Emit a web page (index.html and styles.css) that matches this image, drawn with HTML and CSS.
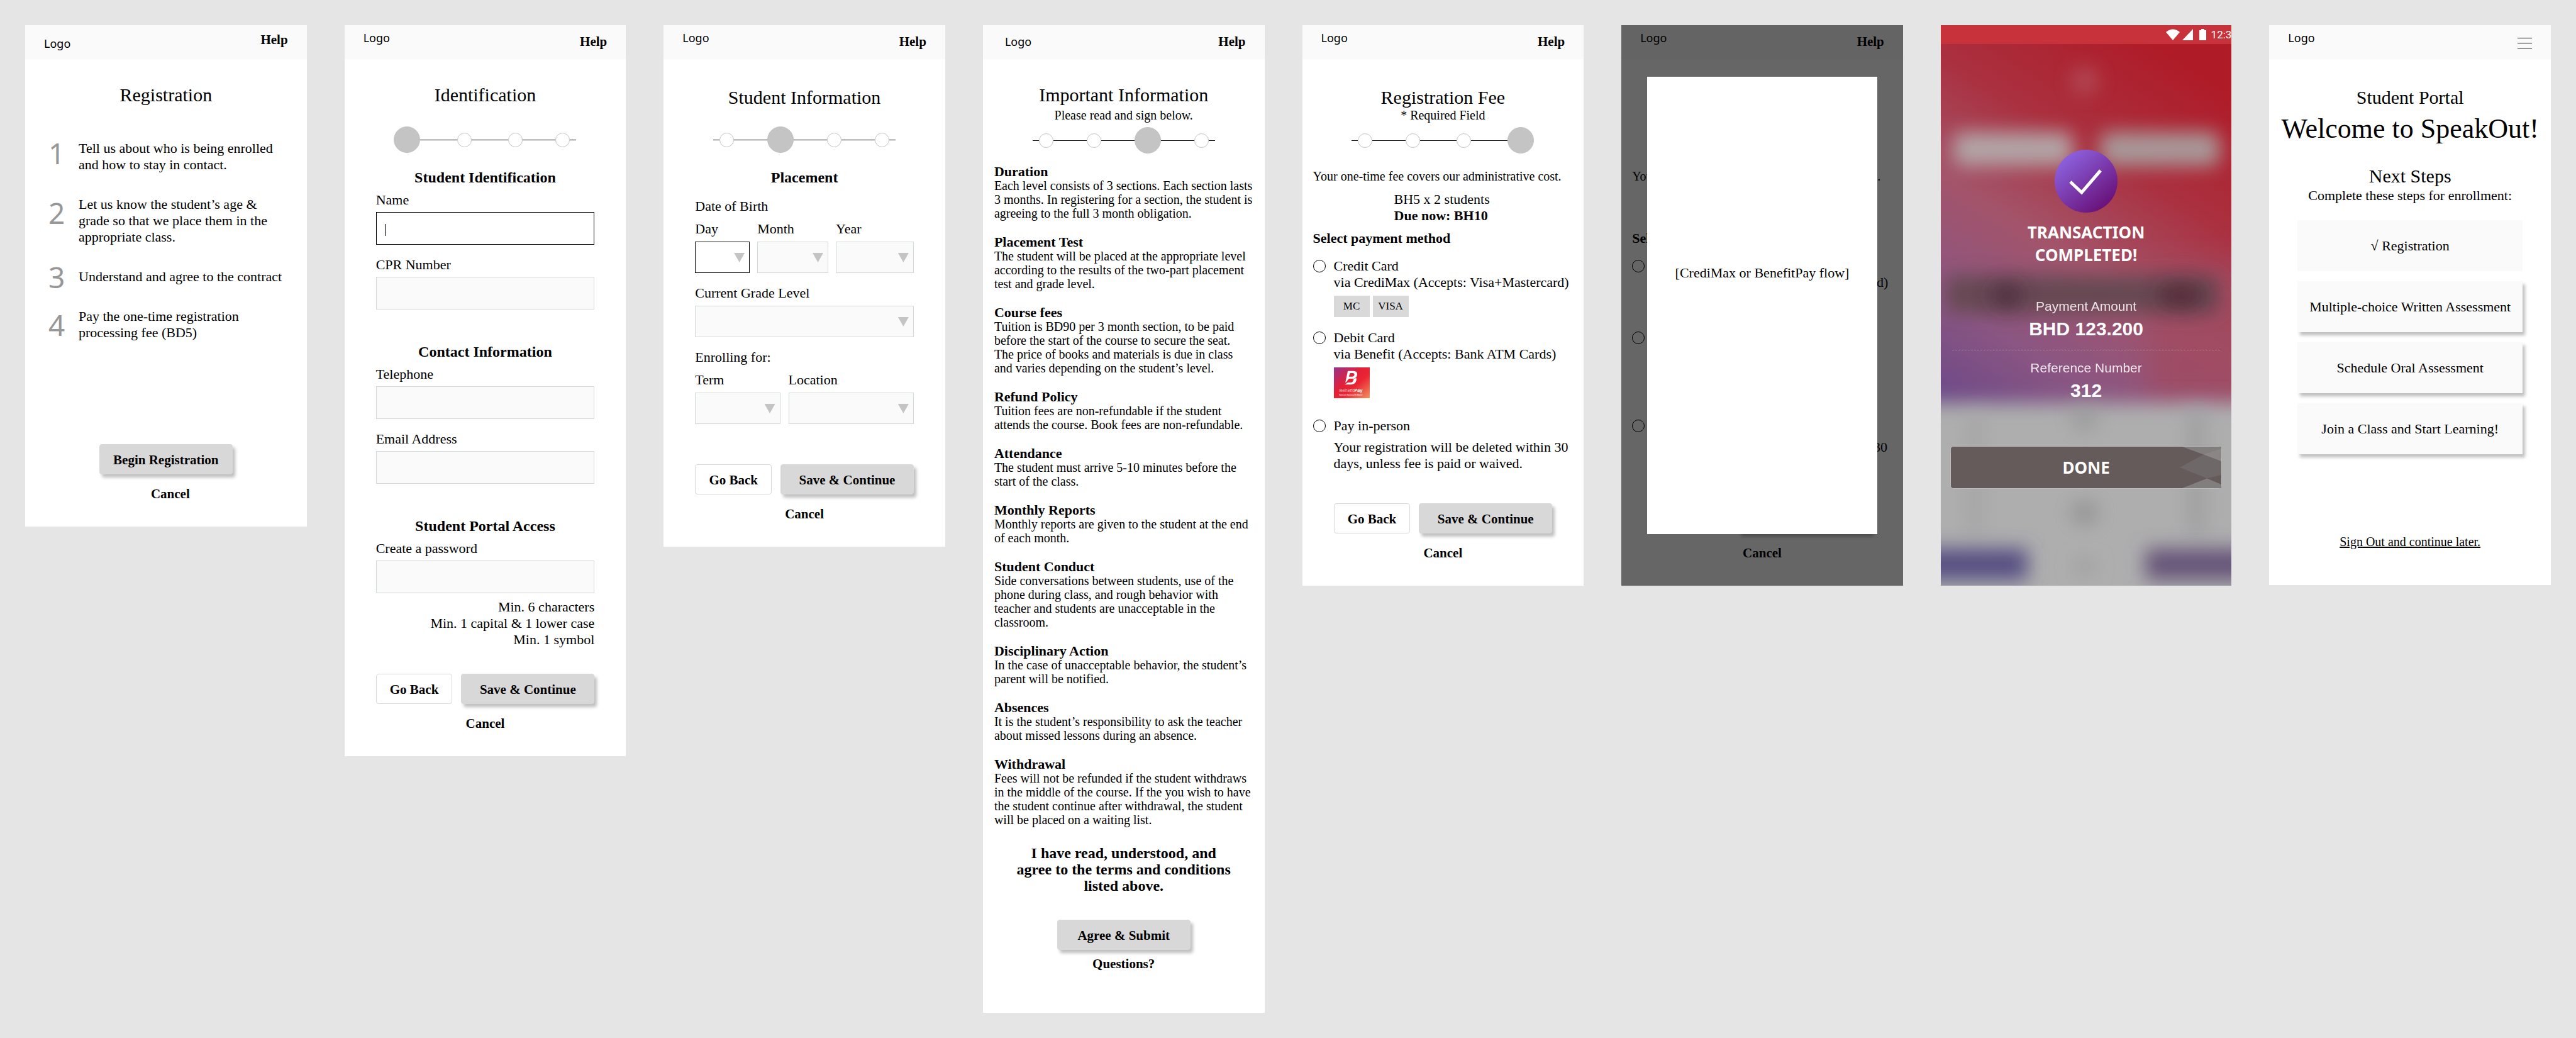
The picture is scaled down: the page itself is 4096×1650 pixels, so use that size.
FILE: index.html
```html
<!DOCTYPE html>
<html lang="en">
<head>
<meta charset="utf-8">
<title>SpeakOut! Registration Flow</title>
<meta name="viewport" content="width=device-width, initial-scale=1">
<link rel="stylesheet" href="styles.css">
</head>
<body>
<main class="board">

  <section class="screen">
    <header class="header">
      <span class="logo logo--low">Logo</span>
      <a class="link header__help header__help--high" href="#">Help</a>
    </header>
    <h1 class="title">Registration</h1>
    <ol class="steps">
      <li class="steps__item"><span class="steps__num steps__num--top">1</span><p>Tell us about who is being enrolled<br>and how to stay in contact.</p></li>
      <li class="steps__item"><span class="steps__num">2</span><p>Let us know the student’s age &amp;<br>grade so that we place them in the<br>appropriate class.</p></li>
      <li class="steps__item"><span class="steps__num steps__num--single">3</span><p>Understand and agree to the contract</p></li>
      <li class="steps__item"><span class="steps__num">4</span><p>Pay the one-time registration<br>processing fee (BD5)</p></li>
    </ol>
    <footer class="footer footer--start">
      <button class="btn btn--primary btn--solo" type="button">Begin Registration</button>
      <a class="link footer__link footer__link--shifted" href="#">Cancel</a>
    </footer>
  </section>

  <section class="screen">
    <header class="header">
      <span class="logo">Logo</span>
      <a class="link header__help" href="#">Help</a>
    </header>
    <h1 class="title">Identification</h1>
    <div class="stepper stepper--one">
      <span class="dot dot--on"></span><span class="bar bar--long"></span><span class="dot"></span><span class="bar bar--long"></span><span class="dot"></span><span class="bar"></span><span class="dot"></span><span class="bar bar--tail"></span>
    </div>
    <form class="form">
      <section class="form__group">
        <h2 class="subtitle">Student Identification</h2>
        <div class="field"><label for="name">Name</label><input class="input input--active" id="name" type="text" value="|"></div>
        <div class="field"><label for="cpr">CPR Number</label><input class="input" id="cpr" type="text"></div>
      </section>
      <section class="form__group">
        <h2 class="subtitle">Contact Information</h2>
        <div class="field"><label for="tel">Telephone</label><input class="input" id="tel" type="tel"></div>
        <div class="field"><label for="email">Email Address</label><input class="input" id="email" type="email"></div>
      </section>
      <section class="form__group">
        <h2 class="subtitle">Student Portal Access</h2>
        <div class="field"><label for="password">Create a password</label><input class="input" id="password" type="password"></div>
        <p class="form__hint">Min. 6 characters<br>Min. 1 capital &amp; 1 lower case<br>Min. 1 symbol</p>
      </section>
    </form>
    <footer class="footer footer--identification">
      <div class="actions"><button class="btn btn--outline" type="button">Go Back</button><button class="btn btn--primary" type="button">Save &amp; Continue</button></div>
      <a class="link footer__link" href="#">Cancel</a>
    </footer>
  </section>

  <section class="screen">
    <header class="header">
      <span class="logo">Logo</span>
      <a class="link header__help" href="#">Help</a>
    </header>
    <h1 class="title title--low">Student Information</h1>
    <div class="stepper stepper--two">
      <span class="bar bar--tail"></span><span class="dot"></span><span class="bar"></span><span class="dot dot--on"></span><span class="bar"></span><span class="dot"></span><span class="bar"></span><span class="dot"></span><span class="bar bar--tail"></span>
    </div>
    <form class="placement">
      <h2 class="subtitle">Placement</h2>
      <p class="placement__lead">Date of Birth</p>
      <div class="placement__row placement__row--birth">
        <div class="choice"><label for="day">Day</label><span class="select"><select class="input input--active" id="day"><option></option></select></span></div>
        <div class="choice"><label for="month">Month</label><span class="select"><select class="input" id="month"><option></option></select></span></div>
        <div class="choice"><label for="year">Year</label><span class="select"><select class="input" id="year"><option></option></select></span></div>
      </div>
      <div class="placement__row placement__row--grade">
        <div class="choice"><label for="grade">Current Grade Level</label><span class="select"><select class="input" id="grade"><option></option></select></span></div>
      </div>
      <p class="placement__lead">Enrolling for:</p>
      <div class="placement__row placement__row--enroll">
        <div class="choice"><label for="term">Term</label><span class="select"><select class="input" id="term"><option></option></select></span></div>
        <div class="choice"><label for="location">Location</label><span class="select"><select class="input" id="location"><option></option></select></span></div>
      </div>
    </form>
    <footer class="footer footer--placement">
      <div class="actions"><button class="btn btn--outline" type="button">Go Back</button><button class="btn btn--primary" type="button">Save &amp; Continue</button></div>
      <a class="link footer__link" href="#">Cancel</a>
    </footer>
  </section>

  <section class="screen">
    <header class="header header--wide">
      <span class="logo logo--mid">Logo</span>
      <a class="link header__help" href="#">Help</a>
    </header>
    <h1 class="title">Important Information</h1>
    <p class="tagline tagline--spaced">Please read and sign below.</p>
    <div class="stepper stepper--under">
      <span class="bar bar--tail"></span><span class="dot"></span><span class="bar"></span><span class="dot"></span><span class="bar"></span><span class="dot dot--on"></span><span class="bar"></span><span class="dot"></span><span class="bar bar--tail"></span>
    </div>
    <div class="terms">
      <section><h2>Duration</h2><p>Each level consists of 3 sections. Each section lasts<br>3 months. In registering for a section, the student is<br>agreeing to the full 3 month obligation.</p></section>
      <section><h2>Placement Test</h2><p>The student will be placed at the appropriate level<br>according to the results of the two-part placement<br>test and grade level.</p></section>
      <section><h2>Course fees</h2><p>Tuition is BD90 per 3 month section, to be paid<br>before the start of the course to secure the seat.<br>The price of books and materials is due in class<br>and varies depending on the student’s level.</p></section>
      <section><h2>Refund Policy</h2><p>Tuition fees are non-refundable if the student<br>attends the course. Book fees are non-refundable.</p></section>
      <section><h2>Attendance</h2><p>The student must arrive 5-10 minutes before the<br>start of the class.</p></section>
      <section><h2>Monthly Reports</h2><p>Monthly reports are given to the student at the end<br>of each month.</p></section>
      <section><h2>Student Conduct</h2><p>Side conversations between students, use of the<br>phone during class, and rough behavior with<br>teacher and students are unacceptable in the<br>classroom.</p></section>
      <section><h2>Disciplinary Action</h2><p>In the case of unacceptable behavior, the student’s<br>parent will be notified.</p></section>
      <section><h2>Absences</h2><p>It is the student’s responsibility to ask the teacher<br>about missed lessons during an absence.</p></section>
      <section><h2>Withdrawal</h2><p>Fees will not be refunded if the student withdraws<br>in the middle of the course. If the you wish to have<br>the student continue after withdrawal, the student<br>will be placed on a waiting list.</p></section>
    </div>
    <p class="consent">I have read, understood, and<br>agree to the terms and conditions<br>listed above.</p>
    <footer class="footer footer--terms">
      <button class="btn btn--primary btn--solo" type="button">Agree &amp; Submit</button>
      <a class="link footer__link footer__link--tight" href="#">Questions?</a>
    </footer>
  </section>

  <section class="screen">
    <header class="header">
      <span class="logo">Logo</span>
      <a class="link header__help" href="#">Help</a>
    </header>
    <h1 class="title title--low">Registration Fee</h1>
    <p class="tagline">* Required Field</p>
    <div class="stepper stepper--under">
      <span class="bar bar--tail"></span><span class="dot"></span><span class="bar"></span><span class="dot"></span><span class="bar bar--long"></span><span class="dot"></span><span class="bar bar--long"></span><span class="dot dot--on"></span>
    </div>
    <div class="fee">
      <p class="fee__note">Your one-time fee covers our administrative cost.</p>
      <p class="fee__due">BH5 x 2 students<br><strong>Due now: BH10</strong></p>
      <h2 class="fee__heading">Select payment method</h2>
      <div class="method">
        <input class="method__radio" id="credit" type="radio" name="method">
        <label class="method__label" for="credit">Credit Card<br>via CrediMax (Accepts: Visa+Mastercard)</label>
        <div class="method__cards"><span class="card">MC</span><span class="card">VISA</span></div>
      </div>
      <div class="method">
        <input class="method__radio" id="debit" type="radio" name="method">
        <label class="method__label" for="debit">Debit Card<br>via Benefit (Accepts: Bank ATM Cards)</label>
        <div class="method__cards">
          <svg class="benefit" viewBox="0 0 276 240" preserveAspectRatio="none">
            <defs><linearGradient id="benefitFill" x1="0" y1="0" x2="1" y2="1"><stop offset="0" stop-color="#96348c"/><stop offset=".42" stop-color="#e51f36"/><stop offset=".6" stop-color="#ea2534"/><stop offset="1" stop-color="#f0935f"/></linearGradient></defs>
            <rect width="276" height="240" fill="url(#benefitFill)"/>
            <path d="M107 28H150Q182 30 179 55Q178 74 162 84L150 88H115L93 117H88ZM124 44L115 72H140Q156 70 158 56Q158 45 146 44Z" fill="#fff" fill-rule="evenodd"/>
            <path d="M152 90L172 82Q178 98 168 114Q156 133 130 134H84L108 117H134Q148 114 152 90Z" fill="#fff"/>
            <text x="131" y="192" font-family="Noto Sans, sans-serif" font-size="36" font-weight="300" fill="#fff" text-anchor="middle">Benefit<tspan font-weight="700">Pay</tspan></text>
            <text x="131" y="219" font-family="Noto Sans, sans-serif" font-size="15" fill="#fff" text-anchor="middle">Bahrain National E-Wallet</text>
          </svg>
        </div>
      </div>
      <div class="method method--person">
        <input class="method__radio" id="person" type="radio" name="method">
        <label class="method__label" for="person">Pay in-person</label>
        <p class="method__note">Your registration will be deleted within 30<br>days, unless fee is paid or waived.</p>
      </div>
    </div>
    <footer class="footer footer--fee">
      <div class="actions"><button class="btn btn--outline" type="button">Go Back</button><button class="btn btn--primary" type="button">Save &amp; Continue</button></div>
      <a class="link footer__link" href="#">Cancel</a>
    </footer>
  </section>

  <section class="screen screen--modal">
    <header class="header">
      <span class="logo">Logo</span>
      <a class="link header__help" href="#">Help</a>
    </header>
    <h1 class="title title--low">Registration Fee</h1>
    <p class="tagline">* Required Field</p>
    <div class="stepper stepper--under">
      <span class="bar bar--tail"></span><span class="dot"></span><span class="bar"></span><span class="dot"></span><span class="bar bar--long"></span><span class="dot"></span><span class="bar bar--long"></span><span class="dot dot--on"></span>
    </div>
    <div class="fee">
      <p class="fee__note">Your one-time fee covers our administrative cost.</p>
      <p class="fee__due">BH5 x 2 students<br><strong>Due now: BH10</strong></p>
      <h2 class="fee__heading">Select payment method</h2>
      <div class="method">
        <input class="method__radio" id="credit-open" type="radio" name="method-open">
        <label class="method__label" for="credit-open">Credit Card<br>via CrediMax (Accepts: Visa+Mastercard)</label>
        <div class="method__cards"><span class="card">MC</span><span class="card">VISA</span></div>
      </div>
      <div class="method">
        <input class="method__radio" id="debit-open" type="radio" name="method-open">
        <label class="method__label" for="debit-open">Debit Card<br>via Benefit (Accepts: Bank ATM Cards)</label>
        <div class="method__cards"><span class="benefit"></span></div>
      </div>
      <div class="method method--person">
        <input class="method__radio" id="person-open" type="radio" name="method-open">
        <label class="method__label" for="person-open">Pay in-person</label>
        <p class="method__note">Your registration will be deleted within 30<br>days, unless fee is paid or waived.</p>
      </div>
    </div>
    <footer class="footer footer--fee">
      <div class="actions"><button class="btn btn--outline" type="button">Go Back</button><button class="btn btn--primary" type="button">Save &amp; Continue</button></div>
      <a class="link footer__link" href="#">Cancel</a>
    </footer>
    <div class="backdrop"></div>
    <div class="modal" role="dialog" aria-label="Payment">[CrediMax or BenefitPay flow]</div>
  </section>

  <section class="screen receipt">
    <svg class="receipt__bg" viewBox="0 0 463 891" preserveAspectRatio="none" aria-hidden="true">
      <defs>
        <linearGradient id="wash" gradientUnits="userSpaceOnUse" x1="400" y1="60" x2="60" y2="620">
          <stop offset="0" stop-color="#af1b27"/><stop offset=".3" stop-color="#aa303f"/><stop offset=".55" stop-color="#a3546a"/><stop offset=".8" stop-color="#8b5682"/><stop offset="1" stop-color="#6f4a88"/>
        </linearGradient>
        <filter id="soft" x="-100%" y="-150%" width="300%" height="400%"><feGaussianBlur stdDeviation="15"/></filter>
        <filter id="softer" x="-100%" y="-150%" width="300%" height="400%"><feGaussianBlur stdDeviation="22"/></filter>
      </defs>
      <rect width="463" height="891" fill="url(#wash)"/>
      <rect x="330" y="380" width="190" height="220" fill="#a04860" opacity=".7" filter="url(#softer)"/>
      <circle cx="229" cy="88" r="22" fill="#b45864" opacity=".7" filter="url(#soft)"/>
      <rect x="20" y="170" width="190" height="54" rx="14" fill="#b3aaab" opacity=".95" filter="url(#soft)"/>
      <rect x="254" y="170" width="190" height="54" rx="14" fill="#a89f9f" opacity=".95" filter="url(#soft)"/>
      <rect x="8" y="398" width="434" height="60" rx="14" fill="#664853" filter="url(#soft)"/>
      <ellipse cx="105" cy="430" rx="26" ry="20" fill="#4c2c3e" opacity=".8" filter="url(#soft)"/>
      <ellipse cx="382" cy="430" rx="38" ry="20" fill="#522636" opacity=".8" filter="url(#soft)"/>
      <rect x="-60" y="600" width="583" height="360" fill="#aeaeaf" filter="url(#soft)"/>
      <ellipse cx="229" cy="625" rx="22" ry="20" fill="#989899" opacity=".8" filter="url(#soft)"/>
      <ellipse cx="229" cy="775" rx="22" ry="18" fill="#8c8c8d" opacity=".8" filter="url(#soft)"/>
      <ellipse cx="229" cy="860" rx="18" ry="10" fill="#9a9a9b" filter="url(#soft)"/>
      <rect x="392" y="610" width="30" height="200" fill="#a0a0a1" filter="url(#soft)"/>
      <rect x="42" y="620" width="26" height="190" fill="#a5a5a6" filter="url(#soft)"/>
      <rect x="-60" y="832" width="198" height="50" fill="#565082" filter="url(#soft)"/>
      <rect x="326" y="832" width="198" height="50" fill="#665478" filter="url(#soft)"/>
    </svg>
    <div class="status">
      <svg class="status__icons" viewBox="0 0 64 18" aria-hidden="true">
        <path d="M0 5Q11-4 22 5L11 18ZM26 18L43 0V18ZM53 2h3V0h5v2h3v16H53Z" fill="#fff"/>
      </svg>
      <span class="status__time">12:3</span>
    </div>
    <div class="receipt__body">
      <svg class="receipt__tick" viewBox="0 0 100 100" aria-hidden="true">
        <defs><linearGradient id="tickFill" x1=".15" y1=".1" x2=".8" y2=".9"><stop offset="0" stop-color="#8c63e0"/><stop offset="1" stop-color="#6a127a"/></linearGradient></defs>
        <circle cx="50" cy="50" r="50" fill="url(#tickFill)"/>
        <path d="M25 51L43 68L73 33" fill="none" stroke="#fff" stroke-width="5"/>
      </svg>
      <h1 class="receipt__title">TRANSACTION<br>COMPLETED!</h1>
      <dl class="receipt__list">
        <div class="receipt__row"><dt>Payment Amount</dt><dd>BHD 123.200</dd></div>
        <div class="receipt__row"><dt>Reference Number</dt><dd>312</dd></div>
      </dl>
      <button class="receipt__done" type="button">
        <svg class="receipt__folds" viewBox="0 0 70 68" preserveAspectRatio="none" aria-hidden="true">
          <path d="M4 0H70V22L40 13Z" fill="#837e7e"/><path d="M4 68L46 52L70 62V68Z" fill="#837e7e"/><path d="M0 34L40 13L70 24V46L46 52Z" fill="#6f6868"/><path d="M40 13L70 3V24Z" fill="#8b8686"/>
        </svg>
        <span class="receipt__done-text">DONE</span>
      </button>
    </div>
  </section>

  <section class="screen">
    <header class="header">
      <span class="logo">Logo</span>
      <button class="menu" type="button" aria-label="Menu"><span></span><span></span><span></span></button>
    </header>
    <h1 class="title title--low">Student Portal</h1>
    <p class="welcome">Welcome to SpeakOut!</p>
    <h2 class="next">Next Steps</h2>
    <p class="next__note">Complete these steps for enrollment:</p>
    <nav class="tasks">
      <a class="task task--done" href="#">√ Registration</a>
      <a class="task" href="#">Multiple-choice Written Assessment</a>
      <a class="task" href="#">Schedule Oral Assessment</a>
      <a class="task" href="#">Join a Class and Start Learning!</a>
    </nav>
    <a class="signout" href="#">Sign Out and continue later.</a>
  </section>

</main>
</body>
</html>
```
FILE: styles.css
```css
*, *::before, *::after { box-sizing: border-box; }

body {
  margin: 0;
  background: #e5e5e5;
  color: #000;
  font: 22px/26px "Liberation Serif", "Times New Roman", serif;
}

h1, h2, p, ol, dl, dd { margin: 0; padding: 0; }
button, input, select { font: inherit; color: inherit; margin: 0; }
a { color: inherit; }

.board {
  display: grid;
  grid-template-columns: 720fr 720fr 720fr 720fr 720fr 720fr 744fr 720fr;
  gap: 60px;
  align-items: start;
  padding: 40px;
}

.screen {
  display: flex;
  flex-direction: column;
  background: #fff;
  white-space: nowrap;
  padding-bottom: 40px;
}

/* Header */
.header {
  display: flex;
  justify-content: space-between;
  align-items: flex-start;
  min-height: 54px;
  padding: 0 30px;
  background: #fafafa;
}
.header--wide { padding-left: 35px; }
.logo { margin-top: 8px; font: 18px/24px "Noto Sans", sans-serif; }
.logo--mid { margin-top: 14px; }
.logo--low { margin-top: 17px; }
.link { font-size: 21px; line-height: 24px; font-weight: bold; text-decoration: none; }
.header__help { margin-top: 14px; }
.header__help--high { margin-top: 11px; }
.menu {
  display: flex;
  flex-direction: column;
  gap: 7px;
  width: 23px;
  margin-top: 20px;
  padding: 0;
  border: 0;
  background: none;
}
.menu span { height: 1px; background: #000; }

/* Headings */
.title {
  margin-top: 40px;
  font-size: 30px;
  line-height: 34px;
  font-weight: normal;
  text-align: center;
}
.title--low { margin-top: 44px; }
.subtitle { font-size: 24px; line-height: 28px; text-align: center; }
.tagline { font-size: 20px; line-height: 22px; text-align: center; }
.tagline--spaced { margin-top: 4px; }

/* Progress */
.stepper {
  display: flex;
  align-items: center;
  align-self: center;
  width: 290px;
  height: 42px;
}
.stepper--one { margin-top: 33px; }
.stepper--two { margin-top: 29px; }
.stepper--under { margin-top: 8px; }
.dot { width: 23px; height: 23px; border: 1px solid #c4c4c4; border-radius: 50%; background: #fff; }
.dot--on { width: 42px; height: 42px; background: #c4c4c4; }
.bar { flex: 10; height: 1px; background: #000; }
.bar--long { flex: 11; }
.bar--tail { flex: none; width: 10px; }

/* Overview list */
.steps {
  display: flex;
  flex-direction: column;
  gap: 37px;
  margin-top: 55px;
  padding: 0 16px 0 37px;
  list-style: none;
}
.steps__item { display: flex; align-items: flex-start; gap: 22px; }
.steps__num { width: 26px; font: 46px/52px "Noto Sans", sans-serif; color: #979797; }
.steps__num--top { line-height: 40px; }
.steps__num--single { line-height: 26px; }

/* Buttons */
.footer { display: flex; flex-direction: column; align-items: center; padding: 0 50px; }
.footer--start { margin-top: 164px; }
.footer--identification { margin-top: 41px; }
.footer--placement { margin-top: 64px; }
.footer--terms { margin-top: 41px; padding-bottom: 26px; }
.footer--fee { margin-top: 50px; }
.footer__link { margin-top: 19px; }
.footer__link--shifted { padding-left: 14px; }
.footer__link--tight { margin-top: 10px; }
.actions { display: grid; grid-template-columns: 122fr 212fr; gap: 14px; width: 100%; }
.btn {
  min-height: 48px;
  padding: 2px 0 0;
  border: 1px solid #d8d8d8;
  border-radius: 4px;
  background: #fff;
  font-size: 21px;
  line-height: 24px;
  font-weight: bold;
}
.btn--primary { background: #d8d8d8; box-shadow: 4px 5px 5px rgba(0, 0, 0, .25); }
.btn--solo { width: 212px; }

/* Fields */
.form { display: flex; flex-direction: column; gap: 53px; margin-top: 25px; padding: 0 50px; }
.form__group { display: flex; flex-direction: column; }
.field { display: flex; flex-direction: column; gap: 6px; margin-top: 9px; }
.field + .field { margin-top: 19px; }
.form__hint { margin-top: 9px; text-align: right; }
.input {
  width: 100%;
  height: 52px;
  padding: 0 12px;
  border: 1px solid #d0d8da;
  border-radius: 0;
  background: #fafafa;
  appearance: none;
}
.input--active { border-color: #000; background: #fff; }

.placement { display: flex; flex-direction: column; margin-top: 25px; padding: 0 50px; }
.placement__lead { margin-top: 19px; }
.placement__row { display: grid; margin-top: 10px; }
.placement__row--birth { grid-template-columns: 87fr 113fr 124fr; gap: 12px; }
.placement__row--grade { margin-top: 19px; }
.placement__row--enroll { grid-template-columns: 135fr 199fr; gap: 13px; }
.choice { display: flex; flex-direction: column; gap: 7px; }
.select { position: relative; display: block; }
.select .input { display: block; height: 50px; }
.select::after {
  content: "";
  position: absolute;
  right: 8px;
  top: 18px;
  width: 17px;
  height: 15px;
  background: #c4c4c4;
  clip-path: polygon(0 0, 100% 0, 50% 100%);
  pointer-events: none;
}

/* Terms */
.terms {
  display: flex;
  flex-direction: column;
  gap: 24px;
  margin-top: 18px;
  padding-left: 18px;
  font-size: 20px;
  line-height: 22px;
}
.terms h2 { font-size: 22px; line-height: 22px; }
.consent { margin-top: 29px; font-size: 24px; line-height: 26px; font-weight: bold; text-align: center; }

/* Fee */
.fee { display: flex; flex-direction: column; margin-top: 25px; padding-left: 17px; }
.fee__note { font-size: 20px; line-height: 22px; }
.fee__due { margin-top: 13px; padding-left: 129px; }
.fee__heading { margin-top: 12px; font-size: 22px; line-height: 22px; }
.method { display: grid; grid-template-columns: 20px 1fr; column-gap: 13px; margin-top: 20px; }
.method--person { margin-top: 31px; }
.method__radio {
  width: 20px;
  height: 20px;
  margin-top: 3px;
  border: 1px solid #000;
  border-radius: 50%;
  appearance: none;
}
.method__cards, .method__note { grid-column: 2; margin-top: 8px; }
.method__cards { display: flex; gap: 5px; }
.card {
  width: 57px;
  height: 34px;
  background: #d9d9d9;
  font-size: 17px;
  line-height: 34px;
  text-align: center;
}
.benefit { width: 57px; height: 49px; background: #e51f36; }

/* Payment dialog */
.screen--modal { position: relative; }
.backdrop { position: absolute; inset: 0; background: rgba(0, 0, 0, .6); }
.modal {
  position: absolute;
  inset: 82px 41px;
  padding-top: 299px;
  background: #fff;
  text-align: center;
}

/* Receipt */
.receipt {
  position: relative;
  overflow: hidden;
  padding-bottom: 154px;
  color: #fff;
  font: 21px/26px "Liberation Sans", Arial, sans-serif;
}
.receipt__bg { position: absolute; inset: 0; width: 100%; height: 100%; }
.status {
  position: relative;
  display: flex;
  align-items: center;
  justify-content: flex-end;
  gap: 8px;
  height: 30px;
  background: #c8323a;
}
.status__icons { flex: none; width: 64px; height: 18px; }
.status__time { font: 17px/30px Roboto, sans-serif; }
.receipt__body {
  position: relative;
  display: flex;
  flex-direction: column;
  align-items: center;
  padding: 168px 15px 0;
}
.receipt__tick { width: 100px; height: 100px; }
.receipt__title {
  margin-top: 13px;
  font: bold 26px/36px "Noto Sans", sans-serif;
  text-align: center;
}
.receipt__list { width: 100%; padding: 0 3px; margin-top: 51px; text-align: center; }
.receipt__row dd { margin-top: 5px; font-size: 30px; line-height: 36px; font-weight: bold; }
.receipt__row dt { opacity: .85; }
.receipt__row + .receipt__row {
  margin-top: 15px;
  padding-top: 15px;
  border-top: 1px dashed rgba(255, 255, 255, .25);
}
.receipt__done {
  position: relative;
  width: 100%;
  height: 68px;
  margin-top: 70px;
  padding: 0;
  border: 1px solid #bcb9b9;
  border-radius: 5px;
  background: #655b5b;
  font: bold 26px/36px "Noto Sans", sans-serif;
}
.receipt__folds { position: absolute; top: 0; right: 0; width: 66px; height: 100%; }
.receipt__done-text { position: relative; }

/* Portal */
.welcome { margin-top: 8px; font-size: 44px; line-height: 50px; text-align: center; }
.next { margin-top: 33px; font-size: 30px; line-height: 34px; font-weight: normal; text-align: center; }
.next__note { margin-top: 1px; text-align: center; }
.tasks { display: flex; flex-direction: column; gap: 16px; margin-top: 26px; padding: 0 45px; }
.task {
  padding: 28px 0 27px;
  background: #fafafa;
  box-shadow: 4px 5px 5px rgba(0, 0, 0, .25);
  text-align: center;
  text-decoration: none;
}
.task--done { box-shadow: none; }
.signout { align-self: center; margin-top: 127px; padding-bottom: 17px; font-size: 20px; line-height: 24px; }
```
